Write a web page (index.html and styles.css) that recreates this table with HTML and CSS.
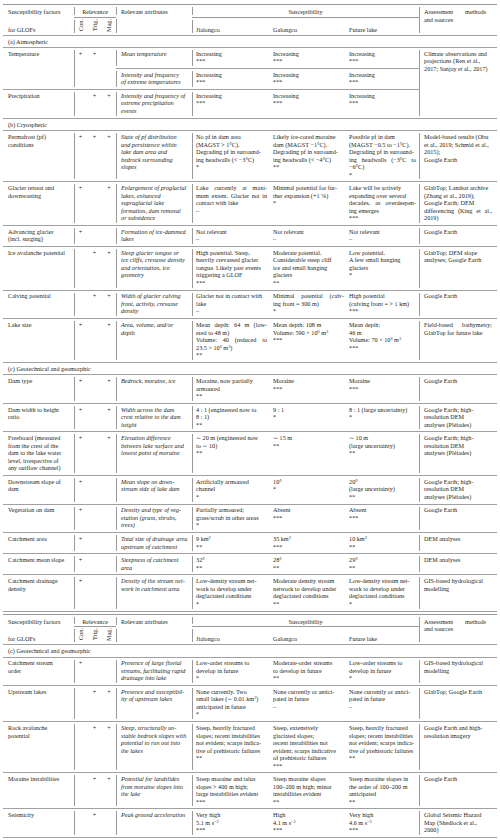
FILE: index.html
```html
<!DOCTYPE html>
<html lang="en">
<head>
<meta charset="utf-8">
<title>GLOF susceptibility factors</title>
<link rel="stylesheet" href="styles.css">
</head>
<body>
<table class="gt t1">
<colgroup><col class="c-fac"><col class="c-con"><col class="c-trig"><col class="c-mag"><col class="c-att"><col class="c-jia"><col class="c-gal"><col class="c-fut"><col class="c-ass"></colgroup>
<thead>
<tr class="h1">
<th class="f">Susceptibility factors</th>
<th colspan="3" class="rel">Relevance</th>
<th class="a">Relevant attributes</th>
<th colspan="3" class="sus">Susceptibility</th>
<th rowspan="2" class="s"><span class="j jh">Assessment methods</span>and sources</th>
</tr>
<tr class="h2">
<th class="f bot">for GLOFs</th>
<th class="c rot"><span>Con.</span></th>
<th class="t rot"><span>Trig.</span></th>
<th class="m rot"><span>Mag.</span></th>
<th class="a"></th>
<th class="j1 bot">Jialongco</th>
<th class="j2 bot">Galongco</th>
<th class="j3 bot">Future lake</th>
</tr>
</thead>
<tbody>
<tr class="sec"><td colspan="9">(a) Atmospheric</td></tr>
<tr class="sub">
<td class="f" rowspan="2">Temperature</td>
<td class="c" rowspan="2">+</td><td class="t" rowspan="2">+</td><td class="m" rowspan="2"></td>
<td class="a">Mean temperature</td>
<td class="j1">Increasing<br>***</td>
<td class="j2">Increasing<br>***</td>
<td class="j3">Increasing<br>***</td>
<td class="s" rowspan="3">Climate observations and<br>projections (Ren et al.,<br>2017; Sanjay et al., 2017)</td>
</tr>
<tr>
<td class="a">Intensity and frequency<br>of extreme temperatures</td>
<td class="j1">Increasing<br>***</td>
<td class="j2">Increasing<br>***</td>
<td class="j3">Increasing<br>***</td>
</tr>
<tr>
<td class="f">Precipitation</td>
<td class="c"></td><td class="t">+</td><td class="m">+</td>
<td class="a">Intensity and frequency of<br>extreme precipitation<br>events</td>
<td class="j1">Increasing<br>***</td>
<td class="j2">Increasing<br>***</td>
<td class="j3">Increasing<br>***</td>
</tr>
<tr class="sec"><td colspan="9">(b) Cryospheric</td></tr>
<tr>
<td class="f">Permafrost (pf)<br>conditions</td>
<td class="c">+</td><td class="t">+</td><td class="m">+</td>
<td class="a">State of pf distribution<br>and persistence within<br>lake dam area and<br>bedrock surrounding<br>slopes</td>
<td class="j1">No pf in dam area<br>(MAGST &gt; 1°C).<br>Degrading pf in surround-<br>ing headwalls (&lt; −3°C)<br>*</td>
<td class="j2">Likely ice-cored moraine<br>dam (MAGST −1°C).<br>Degrading pf in surround-<br>ing headwalls (&lt; −4°C)<br>**</td>
<td class="j3">Possible pf in dam<br>(MAGST −0.5 to −1°C).<br>Degrading pf in surround-<br><span class="j">ing headwalls (−3°C to</span>−6°C)<br>*</td>
<td class="s">Model-based results (Obu<br>et al., 2019; Schmid et al.,<br>2015);<br>Google Earth</td>
</tr>
<tr>
<td class="f">Glacier retreat and<br>downwasting</td>
<td class="c">+</td><td class="t"></td><td class="m">+</td>
<td class="a">Enlargement of proglacial<br>lakes, enhanced<br>supraglacial lake<br>formation, dam removal<br>or subsidence</td>
<td class="j1"><span class="j">Lake currently at maxi-</span><span class="j">mum extent. Glacier not in</span>contact with lake<br>–</td>
<td class="j2">Minimal potential for fur-<br>ther expansion (+1 %)<br>*</td>
<td class="j3">Lake will be actively<br>expanding over several<br><span class="j">decades, as overdeepen-</span>ing emerges<br>***</td>
<td class="s">GlabTop; Landsat archive<br>(Zhang et al., 2019);<br>Google Earth; DEM<br><span class="j">differencing (King et al.,</span>2019)</td>
</tr>
<tr>
<td class="f">Advancing glacier<br>(incl. surging)</td>
<td class="c">+</td><td class="t"></td><td class="m"></td>
<td class="a">Formation of ice-dammed<br>lakes</td>
<td class="j1">Not relevant<br>–</td>
<td class="j2">Not relevant<br>–</td>
<td class="j3">Not relevant<br>–</td>
<td class="s">Google Earth</td>
</tr>
<tr>
<td class="f">Ice avalanche potential</td>
<td class="c"></td><td class="t">+</td><td class="m">+</td>
<td class="a">Steep glacier tongue or<br>ice cliffs, crevasse density<br>and orientation, ice<br>geometry</td>
<td class="j1">High potential. Steep,<br>heavily crevassed glacier<br>tongue. Likely past events<br>triggering a GLOF<br>***</td>
<td class="j2">Moderate potential.<br>Considerable steep cliff<br>ice and small hanging<br>glaciers<br>**</td>
<td class="j3">Low potential.<br>A few small hanging<br>glaciers<br>*</td>
<td class="s">GlabTop; DEM slope<br>analyses; Google Earth</td>
</tr>
<tr>
<td class="f">Calving potential</td>
<td class="c"></td><td class="t">+</td><td class="m">+</td>
<td class="a">Width of glacier calving<br>front, activity, crevasse<br>density</td>
<td class="j1">Glacier not in contact with<br>lake<br>–</td>
<td class="j2"><span class="j">Minimal potential (calv-</span>ing front = 300 m)<br>*</td>
<td class="j3">High potential<br>(calving front = &gt; 1 km)<br>***</td>
<td class="s">Google Earth</td>
</tr>
<tr>
<td class="f">Lake size</td>
<td class="c">+</td><td class="t"></td><td class="m">+</td>
<td class="a">Area, volume, and/or<br>depth</td>
<td class="j1"><span class="j">Mean depth: 64 m (low-</span>ered to 48 m)<br><span class="j">Volume: 40 (reduced to</span>23.5 × 10<sup>6</sup> m<sup>3</sup>)<br>**</td>
<td class="j2">Mean depth: 108 m<br>Volume: 590 × 10<sup>6</sup> m<sup>3</sup><br>***</td>
<td class="j3">Mean depth:<br>46 m<br>Volume: 70 × 10<sup>6</sup> m<sup>3</sup><br>***</td>
<td class="s"><span class="j">Field-based bathymetry;</span>GlabTop for future lake</td>
</tr>
<tr class="sec"><td colspan="9">(c) Geotechnical and geomorphic</td></tr>
<tr>
<td class="f">Dam type</td>
<td class="c">+</td><td class="t"></td><td class="m">+</td>
<td class="a">Bedrock, moraine, ice</td>
<td class="j1">Moraine, now partially<br>armoured<br>**</td>
<td class="j2">Moraine<br>***</td>
<td class="j3">Moraine<br>***</td>
<td class="s">Google Earth</td>
</tr>
<tr>
<td class="f">Dam width to height<br>ratio</td>
<td class="c">+</td><td class="t"></td><td class="m">+</td>
<td class="a">Width across the dam<br>crest relative to the dam<br>height</td>
<td class="j1">4 : 1 (engineered now to<br>8 : 1)<br>**</td>
<td class="j2">9 : 1<br>*</td>
<td class="j3">8 : 1 (large uncertainty)<br>*</td>
<td class="s">Google Earth; high-<br>resolution DEM<br>analyses (Pléiades)</td>
</tr>
<tr>
<td class="f">Freeboard (measured<br>from the crest of the<br>dam to the lake water<br>level, irrespective of<br>any outflow channel)</td>
<td class="c">+</td><td class="t"></td><td class="m">+</td>
<td class="a">Elevation difference<br>between lake surface and<br>lowest point of moraine</td>
<td class="j1">∼ 20 m (engineered now<br>to ∼ 10)<br>**</td>
<td class="j2">∼ 15 m<br>**</td>
<td class="j3">∼ 10 m<br>(large uncertainty)<br>**</td>
<td class="s">Google Earth; high-<br>resolution DEM<br>analyses (Pléiades)</td>
</tr>
<tr>
<td class="f">Downstream slope of<br>dam</td>
<td class="c">+</td><td class="t"></td><td class="m"></td>
<td class="a">Mean slope on down-<br>stream side of lake dam</td>
<td class="j1">Artificially armoured<br>channel<br>*</td>
<td class="j2">10°<br>*</td>
<td class="j3">20°<br>(large uncertainty)<br>**</td>
<td class="s">Google Earth; high-<br>resolution DEM<br>analyses (Pléiades)</td>
</tr>
<tr>
<td class="f">Vegetation on dam</td>
<td class="c">+</td><td class="t"></td><td class="m"></td>
<td class="a">Density and type of veg-<br>etation (grass, shrubs,<br>trees)</td>
<td class="j1">Partially armoured;<br>grass/scrub in other areas<br>*</td>
<td class="j2">Absent<br>***</td>
<td class="j3">Absent<br>***</td>
<td class="s">Google Earth</td>
</tr>
<tr>
<td class="f">Catchment area</td>
<td class="c">+</td><td class="t"></td><td class="m"></td>
<td class="a">Total size of drainage area<br>upstream of catchment</td>
<td class="j1">9 km<sup>2</sup><br>**</td>
<td class="j2">35 km<sup>2</sup><br>***</td>
<td class="j3">10 km<sup>2</sup><br>**</td>
<td class="s">DEM analyses</td>
</tr>
<tr>
<td class="f">Catchment mean slope</td>
<td class="c">+</td><td class="t"></td><td class="m"></td>
<td class="a">Steepness of catchment<br>area</td>
<td class="j1">32°<br>**</td>
<td class="j2">28°<br>**</td>
<td class="j3">29°<br>**</td>
<td class="s">DEM analyses</td>
</tr>
<tr>
<td class="f">Catchment drainage<br>density</td>
<td class="c">+</td><td class="t"></td><td class="m"></td>
<td class="a">Density of the stream net-<br>work in catchment area</td>
<td class="j1">Low-density stream net-<br>work to develop under<br>deglaciated conditions<br>*</td>
<td class="j2">Moderate density stream<br>network to develop under<br>deglaciated conditions<br>**</td>
<td class="j3">Low-density stream net-<br>work to develop under<br>deglaciated conditions<br>*</td>
<td class="s">GIS-based hydrological<br>modelling</td>
</tr>
</tbody>
</table>

<table class="gt t2">
<colgroup><col class="c-fac"><col class="c-con"><col class="c-trig"><col class="c-mag"><col class="c-att"><col class="c-jia"><col class="c-gal"><col class="c-fut"><col class="c-ass"></colgroup>
<thead>
<tr class="h1">
<th class="f">Susceptibility factors</th>
<th colspan="3" class="rel">Relevance</th>
<th class="a">Relevant attributes</th>
<th colspan="3" class="sus">Susceptibility</th>
<th rowspan="2" class="s"><span class="j jh">Assessment methods</span>and sources</th>
</tr>
<tr class="h2">
<th class="f bot">for GLOFs</th>
<th class="c rot"><span>Con.</span></th>
<th class="t rot"><span>Trig.</span></th>
<th class="m rot"><span>Mag.</span></th>
<th class="a"></th>
<th class="j1 bot">Jialongco</th>
<th class="j2 bot">Galongco</th>
<th class="j3 bot">Future lake</th>
</tr>
</thead>
<tbody>
<tr class="sec"><td colspan="9">(c) Geotechnical and geomorphic</td></tr>
<tr>
<td class="f">Catchment stream<br>order</td>
<td class="c">+</td><td class="t"></td><td class="m"></td>
<td class="a">Presence of large fluvial<br>streams, facilitating rapid<br>drainage into lake</td>
<td class="j1">Low-order streams to<br>develop in future<br>*</td>
<td class="j2">Moderate-order streams<br>to develop in future<br>**</td>
<td class="j3">Low-order streams to<br>develop in future<br>*</td>
<td class="s">GIS-based hydrological<br>modelling</td>
</tr>
<tr>
<td class="f">Upstream lakes</td>
<td class="c"></td><td class="t">+</td><td class="m">+</td>
<td class="a">Presence and susceptibil-<br>ity of upstream lakes</td>
<td class="j1">None currently. Two<br>small lakes (∼ 0.01 km<sup>2</sup>)<br>anticipated in future<br>*</td>
<td class="j2">None currently or antici-<br>pated in future<br>–</td>
<td class="j3">None currently or antici-<br>pated in future<br>–</td>
<td class="s">GlabTop; Google Earth</td>
</tr>
<tr>
<td class="f">Rock avalanche<br>potential</td>
<td class="c"></td><td class="t">+</td><td class="m">+</td>
<td class="a">Steep, structurally un-<br>stable bedrock slopes with<br>potential to run out into<br>the lakes</td>
<td class="j1">Steep, heavily fractured<br>slopes; recent instabilities<br>not evident; scarps indica-<br>tive of prehistoric failures<br>**</td>
<td class="j2">Steep, extensively<br>glaciated slopes;<br>recent instabilities not<br>evident; scarps indicative<br>of prehistoric failures<br>***</td>
<td class="j3">Steep, heavily fractured<br>slopes; recent instabilities<br>not evident; scarps indica-<br>tive of prehistoric failures<br>**</td>
<td class="s">Google Earth and high-<br>resolution imagery</td>
</tr>
<tr>
<td class="f">Moraine instabilities</td>
<td class="c"></td><td class="t">+</td><td class="m">+</td>
<td class="a">Potential for landslides<br>from moraine slopes into<br>the lake</td>
<td class="j1">Steep moraine and talus<br>slopes &gt; 400 m high;<br>large instabilities evident<br>***</td>
<td class="j2">Steep moraine slopes<br>100–200 m high; minor<br>instabilities evident<br>**</td>
<td class="j3">Steep moraine slopes in<br>the order of 100–200 m<br>anticipated<br>**</td>
<td class="s">Google Earth</td>
</tr>
<tr>
<td class="f">Seismicity</td>
<td class="c"></td><td class="t">+</td><td class="m"></td>
<td class="a">Peak ground acceleration</td>
<td class="j1">Very high<br>5.1 m s<sup>−2</sup><br>***</td>
<td class="j2">High<br>4.1 m s<sup>−2</sup><br>***</td>
<td class="j3">Very high<br>4.6 m s<sup>−2</sup><br>***</td>
<td class="s">Global Seismic Hazard<br>Map (Shedlock et al.,<br>2000)</td>
</tr>
</tbody>
</table>
</body>
</html>
```

FILE: styles.css
```css
html, body {
  margin: 0;
  padding: 0;
  background: #ffffff;
}

body {
  padding: 4px 0 0 3px;
  width: 494px;
  font-family: "Liberation Serif", "Times New Roman", serif;
  font-size: 6.2px;
  line-height: 7.5px;
  color: #231f20;
}

.gt {
  width: 494px;
  table-layout: fixed;
  border-collapse: collapse;
  border-top: 1px solid #9a9a9a;
}

.t2 {
  margin-top: 2px;
}

col.c-fac { width: 71px; }
col.c-con { width: 13px; }
col.c-trig { width: 15px; }
col.c-mag { width: 14px; }
col.c-att { width: 76px; }
col.c-jia { width: 77px; }
col.c-gal { width: 76px; }
col.c-fut { width: 74px; }
col.c-ass { width: 78px; }

.gt td,
.gt th {
  padding: 1.8px 2px 3.3px 4px;
  vertical-align: top;
  text-align: left;
  font-weight: normal;
  white-space: nowrap;
  border-bottom: 1px solid #a0a0a0;
}

.gt .f { padding-left: 5px; }
.gt .c, .gt .t, .gt .m { padding-left: 0; padding-right: 0; text-align: center; }
.gt .a { padding-left: 5px; padding-right: 2px; }
.gt td.a { font-style: italic; }
.gt .j1 { padding-left: 4px; padding-right: 2px; }
.gt .j2 { padding-left: 4px; padding-right: 1px; }
.gt .j3 { padding-left: 4px; padding-right: 3px; }
.gt .s { padding-left: 5px; padding-right: 5px; }

.gt .c, .gt .a, .gt .j1, .gt .s, .gt .rel, .gt .sus {
  background: linear-gradient(#9a9a9a, #9a9a9a) 0 50% / 1px calc(100% - 4px) no-repeat;
}

.j {
  display: block;
  white-space: normal;
  text-align: justify;
  text-align-last: justify;
}

.jh {
  margin-right: 6px;
}

sup {
  font-size: 70%;
  line-height: 0;
  vertical-align: 0.4em;
}

.h1 th {
  border-bottom: none;
  padding-top: 3px;
  padding-bottom: 1px;
}

.h1 th.rel,
.h1 th.sus {
  text-align: center;
  border-bottom: 1px solid #9a9a9a;
  padding-left: 0;
  padding-right: 0;
}

.h1 th.s {
  border-bottom: 1px solid #a0a0a0;
}

.h2 {
  height: 18px;
}

.h2 th.bot {
  vertical-align: bottom;
  padding-bottom: 1.5px;
}

.h2 th.rot {
  vertical-align: top;
  padding-top: 1px;
  padding-bottom: 0;
}

.rot span {
  display: inline-block;
  writing-mode: vertical-rl;
  transform: rotate(180deg);
  line-height: 6px;
}

.sec td {
  padding: 2.2px 2px 1.8px 5px;
}
```
